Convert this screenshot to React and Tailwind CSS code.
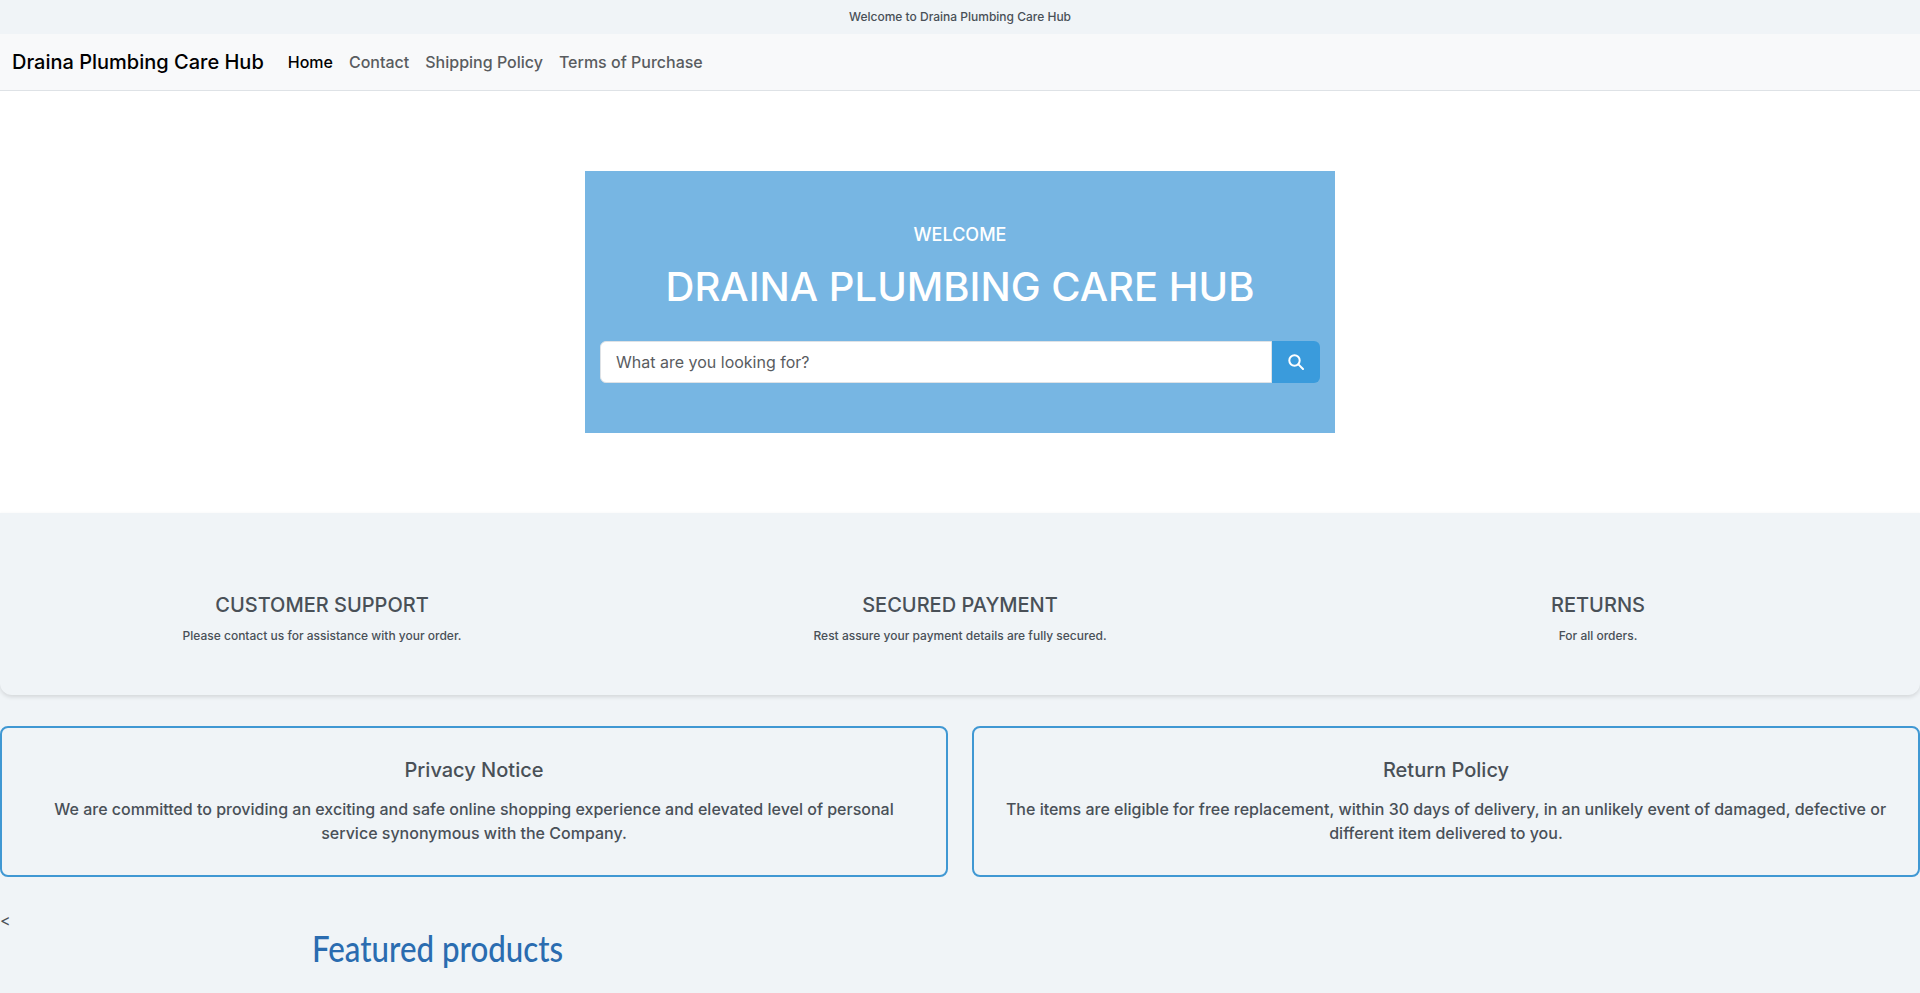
const features = [
  { title: 'CUSTOMER SUPPORT', text: 'Please contact us for assistance with your order.' },
  { title: 'SECURED PAYMENT', text: 'Rest assure your payment details are fully secured.' },
  { title: 'RETURNS', text: 'For all orders.' },
]

const notices = [
  {
    title: 'Privacy Notice',
    text: 'We are committed to providing an exciting and safe online shopping experience and elevated level of personal service synonymous with the Company.',
  },
  {
    title: 'Return Policy',
    text: 'The items are eligible for free replacement, within 30 days of delivery, in an unlikely event of damaged, defective or different item delivered to you.',
  },
]

export default function App() {
  return (
    <div className="h-[993px] overflow-hidden bg-[#f0f4f7] font-['Inter',sans-serif] text-[#495057]">
      {/* Top bar */}
      <div className="h-[34px] flex items-center justify-center text-xs font-medium">Welcome to Draina Plumbing Care Hub</div>

      {/* Nav */}
      <nav className="h-[57px] bg-[#f8f9fa] border-b border-[#dee2e6] flex items-center px-3">
        <span className="text-xl font-medium text-black mr-6">Draina Plumbing Care Hub</span>
        <div className="flex items-center gap-4 font-medium text-[#595c5f]">
          <a className="text-black">Home</a>
          <a>Contact</a>
          <a>Shipping Policy</a>
          <a>Terms of Purchase</a>
        </div>
      </nav>

      {/* Hero */}
      <section className="h-[422px] bg-white flex items-center justify-center">
        <div className="w-[750px] h-[262px] bg-[#77b6e3] px-[15px] pt-[49px] text-white text-center">
          <p className="text-lg font-medium leading-[30px]">WELCOME</p>
          <h1 className="text-[40px] font-medium leading-[48px] mt-[13px]">DRAINA PLUMBING CARE HUB</h1>
          <div className="flex mt-[30px] h-[42px]">
            <input
              readOnly
              placeholder="What are you looking for?"
              className="flex-1 bg-white rounded-l-md border border-[#dee2e6] px-[15px] text-base placeholder:text-[#595c5f] outline-none"
            />
            <button className="w-12 bg-[#3a9bdc] rounded-r-md flex items-center justify-center">
              <svg width="16" height="16" viewBox="0 0 16 16" fill="none" stroke="currentColor" strokeWidth="2" strokeLinecap="round">
                <circle cx="6.5" cy="6.5" r="5.2" />
                <path d="M10.4 10.4 15 15" />
              </svg>
            </button>
          </div>
        </div>
      </section>

      {/* Features */}
      <section className="h-[182px] rounded-b-xl shadow-[0_2px_4px_rgba(0,0,0,0.12)] grid grid-cols-3 px-[3px] pt-[80px] text-center">
        {features.map(({ title, text }) => (
          <div key={title}>
            <h3 className="text-xl font-medium leading-6">{title}</h3>
            <p className="text-xs font-medium mt-[11px]">{text}</p>
          </div>
        ))}
      </section>

      {/* Notices */}
      <section className="grid grid-cols-2 gap-6 mt-[31px]">
        {notices.map(({ title, text }) => (
          <div key={title} className="h-[151px] border-2 border-[#4098d3] rounded-lg px-6 pt-[30px] text-center">
            <h3 className="text-xl font-medium leading-6">{title}</h3>
            <p className="font-medium leading-6 mt-[15px]">{text}</p>
          </div>
        ))}
      </section>

      {/* Featured */}
      <div className="text-base leading-6 mt-[31px]">&lt;</div>
      <div className="pl-[312px] mt-[-6px]">
        <h2 className="inline-block origin-left scale-x-[0.845] text-[37px] leading-[43px] font-medium text-[#2a6cb0] font-['Lato',sans-serif]">Featured products</h2>
      </div>
    </div>
  )
}
